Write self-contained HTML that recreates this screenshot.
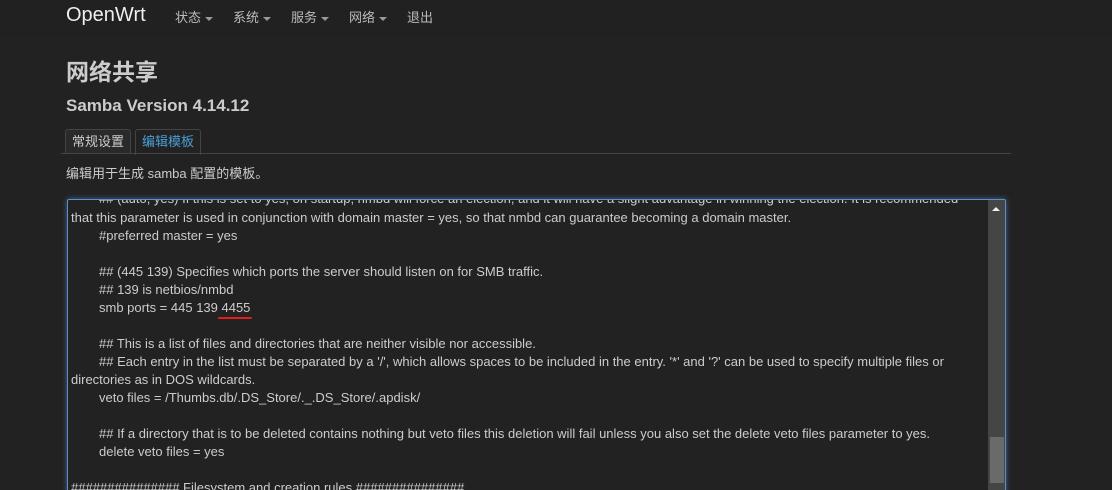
<!DOCTYPE html>
<html><head><meta charset="utf-8"><style>
html,body{margin:0;width:1112px;height:490px;overflow:hidden}
body{background:#222;font-family:"Liberation Sans","Noto Sans CJK SC",sans-serif;color:#ccc;position:relative}
.nav{position:absolute;left:0;top:0;width:1112px;height:36px;background:#212121}
.brand{position:absolute;left:66px;top:4px;font-size:20px;color:#eee}
.m{position:absolute;top:7px;font-size:13px;color:#bbb}
.c{display:inline-block;border-left:4px solid transparent;border-right:4px solid transparent;border-top:4px solid #999;margin-left:4px;vertical-align:middle}
h1{position:absolute;left:66px;top:53px;margin:0;font-size:23px;color:#ccc}
h2{position:absolute;left:66px;top:96px;margin:0;font-size:17px;color:#ccc}
.tab{position:absolute;top:129px;height:24px;border:1px solid #444;border-bottom:none;border-radius:3px 3px 0 0;font-size:13px;line-height:24px;padding:0 6px;background:#2a2a2a;color:#ccc}
.line{position:absolute;left:61px;top:153px;width:950px;height:1px;background:#444}
.desc{position:absolute;left:66px;top:163px;font-size:13px;color:#ccc}
.ta{position:absolute;left:67px;top:199px;width:937px;height:300px;border:1px solid #5b8fc7;box-shadow:0 0 6px rgba(90,150,220,.6);border-radius:2px;overflow:hidden;background:#222}
.t{position:absolute;left:3px;font-size:13px;white-space:pre;color:#ccc;line-height:18px}
.i{left:31px}
.sb{position:absolute;right:0;top:0;width:17px;height:300px;background:#454545}
.th{position:absolute;right:1px;top:237px;width:14px;height:46px;background:#6a6a6a}
</style></head><body>
<div class="nav"></div>
<div class="brand">OpenWrt</div>
<div class="m" style="left:175px">状态<span class="c"></span></div>
<div class="m" style="left:233px">系统<span class="c"></span></div>
<div class="m" style="left:291px">服务<span class="c"></span></div>
<div class="m" style="left:349px">网络<span class="c"></span></div>
<div class="m" style="left:407px">退出</div>
<h1>网络共享</h1>
<h2>Samba Version 4.14.12</h2>
<div class="tab" style="left:65px">常规设置</div>
<div class="tab" style="left:135px;color:#4a9fd8;background:#222;height:25px">编辑模板</div>
<div class="line"></div>
<div class="desc">编辑用于生成 samba 配置的模板。</div>
<div class="ta">
<div class="t i" style="top:-10px">## (auto, yes) If this is set to yes, on startup, nmbd will force an election, and it will have a slight advantage in winning the election. It is recommended</div>
<div class="t" style="top:9px">that this parameter is used in conjunction with domain master = yes, so that nmbd can guarantee becoming a domain master.</div>
<div class="t i" style="top:27px">#preferred master = yes</div>
<div class="t i" style="top:63px">## (445 139) Specifies which ports the server should listen on for SMB traffic.</div>
<div class="t i" style="top:81px">## 139 is netbios/nmbd</div>
<div class="t i" style="top:99px">smb ports = 445 139 4455</div>
<div style="position:absolute;left:150px;top:117px;width:34px;height:2px;background:#e02020;border-radius:1px"></div>
<div class="t i" style="top:135px">## This is a list of files and directories that are neither visible nor accessible.</div>
<div class="t i" style="top:153px">## Each entry in the list must be separated by a '/', which allows spaces to be included in the entry. '*' and '?' can be used to specify multiple files or</div>
<div class="t" style="top:171px">directories as in DOS wildcards.</div>
<div class="t i" style="top:189px">veto files = /Thumbs.db/.DS_Store/._.DS_Store/.apdisk/</div>
<div class="t i" style="top:225px">## If a directory that is to be deleted contains nothing but veto files this deletion will fail unless you also set the delete veto files parameter to yes.</div>
<div class="t i" style="top:243px">delete veto files = yes</div>
<div class="t" style="top:279px">############### Filesystem and creation rules ###############</div>
<div class="sb"><div style="position:absolute;left:4px;top:7px;border-left:4px solid transparent;border-right:4px solid transparent;border-bottom:4px solid #eee"></div><div class="th"></div></div>
</div>
</body></html>
